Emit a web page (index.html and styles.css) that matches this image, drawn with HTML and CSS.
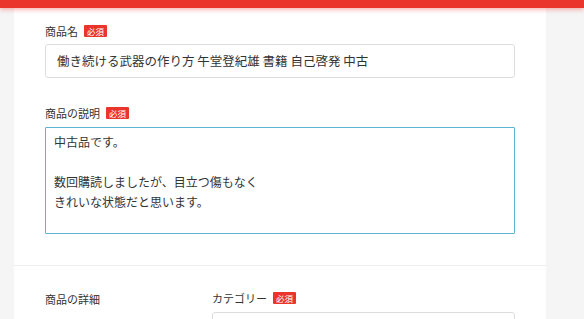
FILE: index.html
```html
<!DOCTYPE html>
<html lang="ja">
<head>
<meta charset="utf-8">
<link rel="stylesheet" href="styles.css">
</head>
<body>
<header class="topbar"></header>
<main class="card">
  <section class="sec sec-main">
    <div class="field">
      <div class="label-row"><span class="label">商品名</span><span class="badge">必須</span></div>
      <div class="input">働き続ける武器の作り方 午堂登紀雄 書籍 自己啓発 中古</div>
    </div>
    <div class="field field-desc">
      <div class="label-row"><span class="label">商品の説明</span><span class="badge">必須</span></div>
      <div class="textarea">中古品です。<br><br>数回購読しましたが、目立つ傷もなく<br>きれいな状態だと思います。</div>
    </div>
  </section>
  <section class="sec sec-detail">
    <div class="detail-title">商品の詳細</div>
    <div class="detail-body">
      <div class="label-row"><span class="label">カテゴリー</span><span class="badge">必須</span></div>
      <div class="input input-cat"></div>
    </div>
  </section>
</main>
</body>
</html>
```
FILE: styles.css
```css
* { box-sizing: border-box; }
html, body { margin: 0; padding: 0; }
body {
  background: #f5f5f5;
  font-family: "Noto Sans CJK JP", "Noto Sans", sans-serif;
  color: #333;
  width: 584px;
  height: 319px;
  overflow: hidden;
}
.topbar {
  height: 8px;
  background: #ea352d;
  box-shadow: 0 2px 4px rgba(234, 53, 45, 0.35);
  position: relative;
  z-index: 2;
}
.card {
  margin: 0 38px 0 14px;
  background: #fff;
  width: 532px;
}
.sec { padding: 15px 31px 31px; }
.sec-main { border-bottom: 1px solid #eeeeee; }
.label-row {
  display: flex;
  align-items: center;
  gap: 6px;
  height: 16px;
  margin-bottom: 5px;
}
.label { font-size: 11px; color: #333; line-height: 16px; }
.badge {
  background: #ea352d;
  color: #fff;
  font-size: 8.5px;
  line-height: 12px;
  height: 12px;
  padding: 0 3px;
  border-radius: 1px;
}
.input {
  height: 34px;
  border: 1px solid #dddddd;
  border-radius: 3px;
  padding: 0 11px;
  font-size: 12.5px;
  line-height: 32px;
  color: #333;
  white-space: nowrap;
}
.field-desc { margin-top: 27px; }
.field-desc .label-row { margin-bottom: 6px; }
.textarea {
  height: 107px;
  border: 1px solid #5bb5d3;
  border-radius: 1px;
  padding: 4px 8px;
  font-size: 12px;
  line-height: 20px;
  color: #333;
}
.sec-detail {
  display: grid;
  grid-template-columns: 167px 1fr;
  padding-top: 24px;
}
.detail-title { font-size: 11px; color: #333; line-height: 16px; padding-top: 1px; }
.input-cat { margin-top: 6px; }
```
